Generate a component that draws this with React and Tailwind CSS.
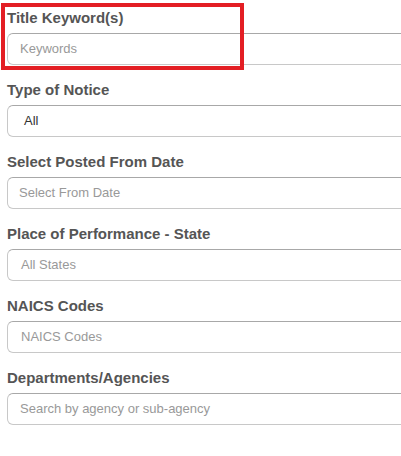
export default function App() {
  const fields = [
    { label: 'Title Keyword(s)', value: 'Keywords', pl: 'pl-[12px]' },
    { label: 'Type of Notice', value: 'All', pl: 'pl-[16px]', dark: true },
    { label: 'Select Posted From Date', value: 'Select From Date', pl: 'pl-[11px]' },
    { label: 'Place of Performance - State', value: 'All States', pl: 'pl-[13px]' },
    { label: 'NAICS Codes', value: 'NAICS Codes', pl: 'pl-[13px]' },
    { label: 'Departments/Agencies', value: 'Search by agency or sub-agency', pl: 'pl-[12px]' },
  ];

  return (
    <div className="relative w-[401px] h-[456px] overflow-hidden bg-white font-['Liberation_Sans',Arial,sans-serif]">
      <div className="flex flex-col pt-[8px] pl-[7px]">
        {fields.map((f) => (
          <div key={f.label} className="mb-[15px] flex flex-col">
            <div className="h-[20px] leading-[20px] text-[15px] font-bold text-[#555] mb-[5px]">
              {f.label}
            </div>
            <div
              className={
                'h-[32px] w-[440px] rounded-[6px] border border-[#c8c8c8] border-t-[#a8a8a8] flex items-center text-[13px] ' +
                f.pl +
                (f.dark ? ' text-[#333]' : ' text-[#999]')
              }
            >
              {f.value}
            </div>
          </div>
        ))}
      </div>

      {/* highlight box */}
      <div className="absolute left-[1px] top-[3px] w-[243px] h-[67px] border-[4px] border-[#e31e24]" />
    </div>
  );
}
